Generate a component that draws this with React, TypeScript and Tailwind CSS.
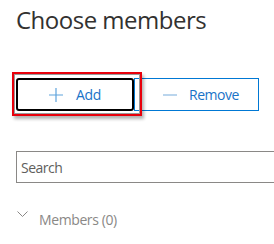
import React from "react";

function PlusIcon() {
  return (
    <svg width="14" height="14" viewBox="0 0 14 14" aria-hidden="true">
      <path d="M7 0v14M0 7h14" stroke="#5ea3dc" strokeWidth="1.2" fill="none" />
    </svg>
  );
}

function MinusIcon() {
  return (
    <svg width="14" height="14" viewBox="0 0 14 14" aria-hidden="true">
      <path d="M0 7h14" stroke="#9cc3e6" strokeWidth="1.4" fill="none" />
    </svg>
  );
}

export default function App() {
  return (
    <div
      className="w-[274px] h-[244px] bg-white overflow-hidden pl-4"
      style={{ fontFamily: '"Open Sans", "Noto Sans", sans-serif' }}
    >
      <h1 className="pt-[4px] text-[24px] leading-[32px] font-normal text-[#323130] tracking-[-0.5px]">
        Choose members
      </h1>

      <div className="relative mt-[42px] flex h-[33px]">
        <button className="flex w-[118px] items-center justify-center gap-[13px] rounded-[3px] border-2 border-black bg-white text-[14px] tracking-[-0.3px] text-[#1a73c7]">
          <PlusIcon />
          <span>Add</span>
        </button>
        <button className="flex w-[125px] items-center gap-[12px] border border-[#0078d4] bg-white pl-[28px] text-[14px] tracking-[-0.5px] text-[#1a73c7]">
          <MinusIcon />
          <span>Remove</span>
        </button>
        <div className="pointer-events-none absolute left-[-4px] top-[-6px] h-[44px] w-[130px] border-2 border-[#e8000b] shadow-[2px_3px_3px_rgba(0,0,0,0.3)]">
          <div className="h-full w-full border border-[#9a9a9a]" />
        </div>
      </div>

      <div className="mt-[40px] flex h-[32px] w-[270px] items-center border border-[#8a8886] px-[4px]">
        <span className="text-[14px] tracking-[-0.5px] text-[#605e5c]">Search</span>
      </div>

      <div className="mt-[27px] flex items-start gap-[11px] pl-[1px] text-[14px] leading-[20px] tracking-[-0.4px] text-[#8a8886]">
        <svg width="11" height="7" viewBox="0 0 11 7" aria-hidden="true" className="mt-[1px]">
          <path d="M0.5 0.5l5 5 5-5" stroke="#8a8886" strokeWidth="1" fill="none" />
        </svg>
        <span>Members (0)</span>
      </div>
    </div>
  );
}
